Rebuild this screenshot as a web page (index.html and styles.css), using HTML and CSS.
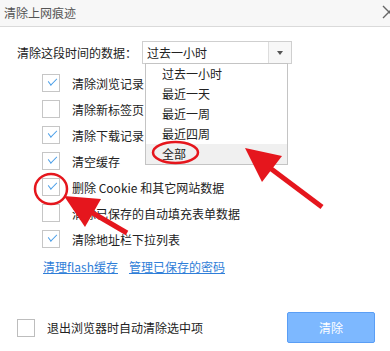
FILE: index.html
```html
<!DOCTYPE html>
<html lang="zh-CN">
<head>
    <meta charset="UTF-8">
    <meta name="viewport" content="width=device-width, initial-scale=1.0">
    <title>清除上网痕迹</title>
    <link rel="stylesheet" href="styles.css">
</head>
<body>
    <div class="titlebar">
        <span class="title">清除上网痕迹</span>
        <svg class="close" width="8" height="14" viewBox="0 0 8 14">
            <path d="M1 1 L13 13 M13 1 L1 13" stroke="#666" stroke-width="1.4" fill="none"/>
        </svg>
    </div>

    <div class="time-row">
        <span class="time-label">清除这段时间的数据：</span>
        <div class="select">
            <span class="select-value">过去一小时</span>
            <span class="select-btn"><span class="caret"></span></span>
            <!-- opened menu -->
            <div class="menu">
                <div class="menu-item">过去一小时</div>
                <div class="menu-item">最近一天</div>
                <div class="menu-item">最近一周</div>
                <div class="menu-item">最近四周</div>
                <div class="menu-item active">全部</div>
            </div>
        </div>
    </div>

    <div class="options">
        <label class="option"><span class="box checked"></span><span>清除浏览记录</span></label>
        <label class="option"><span class="box"></span><span class="clipped">清除新标签页</span></label>
        <label class="option"><span class="box checked"></span><span>清除下载记录</span></label>
        <label class="option"><span class="box checked"></span><span>清空缓存</span></label>
        <label class="option"><span class="box checked"></span><span>删除 Cookie 和其它网站数据</span></label>
        <label class="option"><span class="box"></span><span>清除已保存的自动填充表单数据</span></label>
        <label class="option"><span class="box checked"></span><span>清除地址栏下拉列表</span></label>
    </div>

    <div class="links">
        <a href="#">清理flash缓存</a>
        <a href="#">管理已保存的密码</a>
    </div>

    <div class="footer">
        <label class="option auto"><span class="box"></span><span>退出浏览器时自动清除选中项</span></label>
        <button class="clear-button">清除</button>
    </div>

    <!-- red marks drawn over the screenshot -->
    <svg class="marks" width="390" height="351" viewBox="0 0 390 351">
        <ellipse cx="175.5" cy="152.5" rx="22.5" ry="10.5" fill="none" stroke="#e5161d" stroke-width="2.5"/>
        <ellipse cx="51" cy="189" rx="16" ry="15" fill="none" stroke="#e5161d" stroke-width="2.5"/>
        <polygon points="245,148 282,156 262,182" fill="#e5161d"/>
        <line x1="270" y1="168" x2="322" y2="207" stroke="#e5161d" stroke-width="5"/>
        <polygon points="64,196 101,199 85,227" fill="#e5161d"/>
        <line x1="91" y1="212" x2="127" y2="233" stroke="#e5161d" stroke-width="5"/>
    </svg>
</body>
</html>
```

FILE: styles.css
```css
body {
    margin: 0;
    width: 390px;
    height: 351px;
    overflow: hidden;
    position: relative;
    background: #fff;
    color: #222;
    font-family: "Noto Sans CJK SC", "Noto Sans", sans-serif;
    font-size: 12px;
}
.titlebar {
    height: 26px;
    line-height: 26px;
    background: #f7f7f7;
    border-bottom: 1px solid #dadada;
    padding-left: 4px;
    display: flex;
    align-items: center;
    justify-content: space-between;
}
.title {
    color: #555;
}
.close {
    display: block;
    margin-top: -2px;
}
.time-row {
    margin-top: 14px;
    padding-left: 17px;
    display: flex;
    align-items: center;
}
.time-label {
    width: 125px;
}
.select {
    position: relative;
    width: 150px;
    height: 23px;
    box-sizing: border-box;
    border: 1px solid #cfcfcf;
    display: flex;
    align-items: center;
}
.select-value {
    flex: 1;
    padding-left: 4px;
}
.select-btn {
    width: 22px;
    height: 21px;
    border-left: 1px solid #ddd;
    background: #f7f7f7;
    display: flex;
    align-items: center;
    justify-content: center;
}
.caret {
    width: 0;
    height: 0;
    border-left: 3px solid transparent;
    border-right: 3px solid transparent;
    border-top: 4px solid #555;
}
.menu {
    position: absolute;
    top: 21px;
    left: 2px;
    width: 143px;
    box-sizing: border-box;
    border: 1px solid #c4c4c4;
    background: #fff;
    z-index: 5;
}
.menu-item {
    height: 20px;
    line-height: 20px;
    padding-left: 16px;
}
.menu-item.active {
    background: #f0f0f0;
}
.options {
    margin-top: 10px;
    padding-left: 42px;
    display: flex;
    flex-direction: column;
    gap: 8px;
}
.option {
    display: flex;
    align-items: center;
    height: 18px;
    white-space: nowrap;
}
.clipped {
    width: 73px;
    overflow: hidden;
}
.box {
    width: 18px;
    height: 18px;
    box-sizing: border-box;
    border: 1px solid #c6c6c6;
    margin-right: 12px;
    position: relative;
    flex: none;
}
.box.checked::after {
    content: "";
    position: absolute;
    left: 5px;
    top: 3px;
    width: 8px;
    height: 4px;
    border-left: 1px solid #4a9ee8;
    border-bottom: 1px solid #4a9ee8;
    transform: rotate(-45deg) skewX(-8deg);
}
.links {
    margin-top: 11px;
    padding-left: 43px;
    display: flex;
    gap: 11px;
    line-height: 16px;
}
.links a {
    color: #2f7ed8;
    text-decoration: underline;
}
.footer {
    margin-top: 37px;
    padding: 0 15px 0 17px;
    display: flex;
    align-items: center;
    justify-content: space-between;
}
.footer .box {
    border-color: #bdbdbd;
}
.clear-button {
    width: 88px;
    height: 31px;
    border: 1px solid #5a9ef5;
    border-radius: 2px;
    background: #7db8ff;
    color: #fff;
    font-family: inherit;
    font-size: 12px;
}
.marks {
    position: absolute;
    top: 0;
    left: 0;
    z-index: 10;
    pointer-events: none;
}
```
